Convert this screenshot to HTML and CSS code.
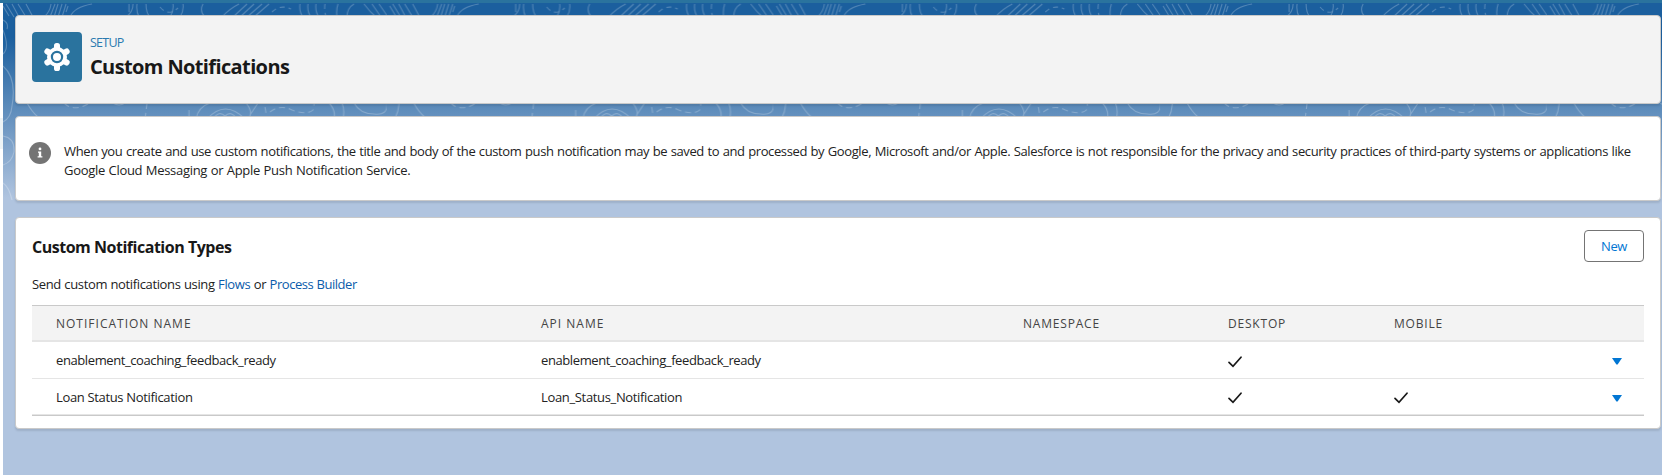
FILE: index.html
```html
<!DOCTYPE html>
<html lang="en">
<head>
<meta charset="utf-8">
<title>Custom Notifications</title>
<link rel="stylesheet" href="styles.css">
</head>
<body>
<div class="rail"></div>
<main class="page">
  <svg class="contours" aria-hidden="true">
    <defs>
      <pattern id="tile" width="386.7" height="200" patternUnits="userSpaceOnUse" x="-3" y="0">
        <g fill="none" stroke="#fff" stroke-opacity=".24" stroke-width="1.1">
          <path d="M3 6q3 5 6 10M6 4l8 13M12 4l7 13M18 4l8 13M26 4l7 13M44 17q6-5 7-13M50 17l5-13M54 17l4-13M58 17l4-13M62 17l4-13M66 12l2-6M70 17q4-10 22-13M126 17q7-5 7-13M129 12v-8M137 4q-1 7 2 13M146 4q0 9 4 13M170 17q4-6 3-13M180 17q4-6 3-13M203 4q-4 7 2 13M222 17q7-8 17-13M233 17l14-13M240 17l14-13M247 17l15-13M254 17l15-13M300 4q-1 8 3 13M308 4q-1 8 3 13M316 4q-1 8 3 13M338 4q-2 6-1 13M347 17q0-9 7-13M364 4q6 8 12 13M372 4l9 13M379 4l9 13"/>
          <path d="M160 7q8 10 18 1M272 12q8-8 19-3M325 4q-1 6 1 13" stroke-dasharray="5 4"/>
          <path d="M27 103q5 9 11 14M196 119q2-12 14-16M207 119q18-20 38 0M213 119q6-9 12-3q6-6 12 3M246 103q8 10 2 16M258 103l-8 12M329 103q7 7 5 16M342 103q3 7 1 16M354 103q6 11 20 11q14 2 13-11M113 103q6 4 12 0"/>
          <path d="M64 103q9 9 24 1M147 103l-2 16M189 110v9M265 107l2 12M270 112q10-8 22-2q16 6 22-1v-6" stroke-dasharray="6 4"/>
          <path d="M3 20q6 3 4 9M3 30q7 18 0 24M3 66q14 12 9 40q-1 12-9 16M3 136q12 2 11 16q-2 10-11 13M3 183q6 4 9 17"/>
        </g>
      </pattern>
    </defs>
    <rect width="100%" height="200" fill="url(#tile)"/>
  </svg>

  <header class="card page-header">
    <div class="setup-icon">
      <svg viewBox="0 0 28 30" width="28" height="30">
        <g fill="#fff">
          <circle cx="14" cy="15" r="10"/>
          <rect x="11" y="1" width="6" height="28" rx="2.6"/>
          <rect x="11" y="1" width="6" height="28" rx="2.6" transform="rotate(60 14 15)"/>
          <rect x="11" y="1" width="6" height="28" rx="2.6" transform="rotate(120 14 15)"/>
        </g>
        <circle cx="14" cy="15" r="5.1" fill="#fff" stroke="#2a739e" stroke-width="2.2"/>
      </svg>
    </div>
    <div class="heading">
      <p class="eyebrow">SETUP</p>
      <h1>Custom Notifications</h1>
    </div>
  </header>

  <section class="card notice">
    <svg class="info" viewBox="0 0 22 22" width="22" height="22">
      <circle cx="11" cy="11" r="11" fill="#747474"/>
      <circle cx="11" cy="6.9" r="1.4" fill="#fff"/>
      <path d="M9 9.4h3.2v4.8h1.2v1.4H8.6v-1.4h1.2v-3.4H9z" fill="#fff"/>
    </svg>
    <p><span class="line one">When you create and use custom notifications, the title and body of the custom push notification may be saved to and processed by Google, Microsoft and/or Apple. Salesforce is not responsible for the privacy and security practices of third-party systems or applications like</span> <span class="line two">Google Cloud Messaging or Apple Push Notification Service.</span></p>
  </section>

  <section class="card types">
    <div class="types-head">
      <h2>Custom Notification Types</h2>
      <button type="button">New</button>
    </div>
    <p class="hint">Send custom notifications using <a>Flows</a> or <a>Process Builder</a></p>
    <table>
      <colgroup><col class="c-name"><col class="c-api"><col class="c-ns"><col class="c-desk"><col class="c-mob"><col></colgroup>
      <thead>
        <tr><th class="wide">NOTIFICATION NAME</th><th class="wide">API NAME</th><th>NAMESPACE</th><th>DESKTOP</th><th>MOBILE</th><th></th></tr>
      </thead>
      <tbody>
        <tr>
          <td>enablement_coaching_feedback_ready</td><td>enablement_coaching_feedback_ready</td><td></td>
          <td><svg class="check" viewBox="0 0 14 12"><path d="M1 6.3l4 4L13 1.2"/></svg></td><td></td>
          <td class="menu"><svg class="arrow" viewBox="0 0 10 7"><path d="M0 0h10L5.6 6.5H4.4z"/></svg></td>
        </tr>
        <tr>
          <td class="loan">Loan Status Notification</td><td class="loan">Loan_Status_Notification</td><td></td>
          <td><svg class="check" viewBox="0 0 14 12"><path d="M1 6.3l4 4L13 1.2"/></svg></td>
          <td><svg class="check" viewBox="0 0 14 12"><path d="M1 6.3l4 4L13 1.2"/></svg></td>
          <td class="menu"><svg class="arrow" viewBox="0 0 10 7"><path d="M0 0h10L5.6 6.5H4.4z"/></svg></td>
        </tr>
      </tbody>
    </table>
  </section>
</main>
</body>
</html>
```
FILE: styles.css
```css
* { box-sizing: border-box; }
body {
  margin: 0;
  height: 475px;
  display: flex;
  overflow: hidden;
  background: #fff;
  border-top: 3px solid #2a739e;
  font: 13px/19px "Open Sans", "Noto Sans", sans-serif;
  letter-spacing: -.4px;
  color: #222;
}
h1, h2, p { margin: 0; }
h1, h2 { color: #181818; }
.rail { width: 3px; flex: none; background: linear-gradient(#fff 115px, #eef4f6 115px 146px, #fff 146px); }
.page {
  position: relative;
  flex: 1;
  padding: 12px 1px 0 12px;
  background: linear-gradient(#1b5f9e 0, #1b5f9e 34px, #b0c4df 195px);
}
.contours { position: absolute; left: 0; top: -3px; width: 100%; height: 200px; }
.card {
  position: relative;
  background: #fff;
  border: 1px solid #c9c9c9;
  border-radius: 4px;
  box-shadow: 0 2px 2px rgba(0, 0, 0, .1);
}
.page-header { height: 89px; display: flex; gap: 8px; padding: 16px; background: #f3f3f3; }
.setup-icon { width: 50px; height: 50px; border-radius: 4px; background: #2a739e; display: grid; place-items: center; }
.eyebrow { padding-top: 1px; line-height: 20px; font-size: 12.5px; color: #2a7ab0; letter-spacing: -.75px; }
h1 { font-size: 20px; line-height: 27px; font-weight: 700; letter-spacing: -.62px; }
.notice { height: 85px; margin-top: 12px; display: flex; padding: 25px 13px; gap: 13px; }
.info { flex: none; }
.line { display: block; white-space: nowrap; word-spacing: .5px; }
.one { letter-spacing: -.378px; }
.two { letter-spacing: -.3px; }
.types { height: 212px; margin-top: 16px; padding: 12px 16px; }
.types-head { display: flex; justify-content: space-between; height: 32px; }
h2 { font-size: 16px; line-height: 34px; font-weight: 700; letter-spacing: -.48px; }
button {
  width: 60px; height: 32px; padding: 0;
  font: inherit; letter-spacing: inherit; color: #0176d3;
  background: #fff; border: 1px solid #747474; border-radius: 4px;
}
.hint { margin-top: 13px; word-spacing: .4px; letter-spacing: -.36px; }
.hint a { color: #0b5cab; }
.hint a:last-child { letter-spacing: -.46px; }
table {
  width: 100%; margin-top: 11px;
  table-layout: fixed; border-collapse: separate; border-spacing: 0;
  border-top: 1px solid #c9c9c9; border-bottom: 1px solid #c9c9c9;
}
.c-name { width: 485px; }
.c-api { width: 482px; }
.c-ns { width: 205px; }
.c-desk { width: 166px; }
.c-mob { width: 207px; }
th, td { padding: 0 0 0 24px; text-align: left; vertical-align: middle; }
th { height: 36px; font-size: 12px; font-weight: 400; letter-spacing: .8px; color: #444; background: #f3f3f3; border-bottom: 2px solid #e5e5e5; }
th.wide { letter-spacing: 1px; }
td { height: 37px; border-bottom: 1px solid #e5e5e5; }
tr:last-child td { height: 36px; }
td.loan { padding-top: 2px; letter-spacing: -.34px; }
.check { display: block; width: 14px; height: 12px; margin-top: 3px; fill: none; stroke: #181818; stroke-width: 1.7; stroke-linecap: round; }
td.menu { padding-left: 35px; }
.arrow { display: block; width: 10px; height: 7px; margin-top: 3px; fill: #0176d3; }
```
